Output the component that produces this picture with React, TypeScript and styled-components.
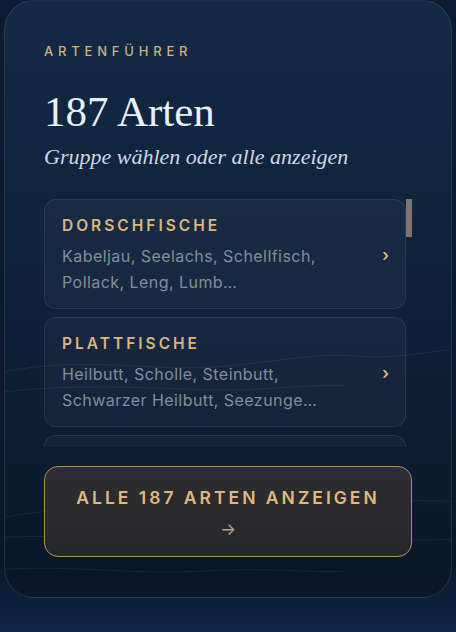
import React from 'react';
import styled, { createGlobalStyle } from 'styled-components';

const GlobalStyle = createGlobalStyle`
  html, body {
    margin: 0;
    padding: 0;
    height: 100%;
  }
  body {
    background: linear-gradient(180deg, #0c1b32 0%, #0a1629 88%, #0f2548 100%);
    font-family: Inter, "Noto Sans", sans-serif;
    overflow: hidden;
  }
`;

const Page = styled.div`
  position: relative;
  width: 456px;
  height: 632px;
  padding: 0 4px;
  box-sizing: border-box;
`;

const Panel = styled.section`
  position: relative;
  height: 598px;
  box-sizing: border-box;
  padding: 40px 39px 40px;
  border-radius: 30px;
  border: 1px solid rgba(150, 175, 205, 0.16);
  background: linear-gradient(180deg, #142945 0%, #0f213a 50%, #0a1628 100%);
  overflow: hidden;
  display: flex;
  flex-direction: column;
`;

const Waves = styled.svg`
  position: absolute;
  left: 0;
  top: 0;
  width: 100%;
  height: 100%;
  pointer-events: none;
`;

const Content = styled.div`
  position: relative;
  z-index: 1;
  display: flex;
  flex-direction: column;
  flex: 1;
  min-height: 0;
`;

const Eyebrow = styled.div`
  font-size: 13px;
  line-height: 20px;
  letter-spacing: 4.8px;
  color: #d2ae7e;
  font-weight: 500;
`;

const Title = styled.h1`
  margin: 28px 0 0;
  font-family: "Liberation Serif", "Times New Roman", serif;
  font-weight: 400;
  font-size: 43px;
  line-height: 46px;
  color: #e9eff7;
`;

const Subtitle = styled.p`
  margin: 8px 0 0;
  font-family: "Liberation Serif", "Times New Roman", serif;
  font-style: italic;
  font-size: 22px;
  line-height: 28px;
  color: #cdd6e2;
`;

const ListArea = styled.div`
  margin-top: 28px;
  height: 248px;
  display: flex;
`;

const List = styled.div`
  flex: 1;
  overflow: hidden;
  display: flex;
  flex-direction: column;
  gap: 8px;
`;

const ScrollTrack = styled.div`
  flex: none;
  width: 6px;
  display: flex;
  flex-direction: column;
`;

const ScrollThumb = styled.div`
  height: 38px;
  background: #7b746f;
`;

const Card = styled.button`
  flex: none;
  width: 362px;
  box-sizing: border-box;
  display: flex;
  align-items: center;
  gap: 12px;
  padding: 16px 16px 13px 17px;
  border-radius: 12px;
  border: 1px solid rgba(160, 185, 215, 0.13);
  background: rgba(255, 255, 255, 0.035);
  text-align: left;
  font-family: inherit;
  cursor: pointer;
`;

const CardBody = styled.div`
  flex: 1;
  min-width: 0;
`;

const CardTitle = styled.div`
  font-size: 15.5px;
  line-height: 20px;
  letter-spacing: 3px;
  font-weight: 600;
  color: #dab680;
`;

const CardText = styled.div`
  margin-top: 7px;
  max-width: 300px;
  font-size: 16px;
  letter-spacing: 0.45px;
  line-height: 26px;
  color: #838d9c;
`;

const Chevron = styled.span`
  flex: none;
  font-size: 17px;
  font-weight: 600;
  color: #dab680;
  line-height: 1;
`;

const AllButton = styled.button`
  margin-top: 19px;
  width: 368px;
  height: 91px;
  box-sizing: border-box;
  border-radius: 14px;
  border: 1.5px solid #ad8f66;
  background: linear-gradient(180deg, rgba(48, 47, 47, 0.92) 0%, rgba(40, 40, 42, 0.92) 100%);
  display: flex;
  flex-direction: column;
  align-items: center;
  padding: 20px 0 0;
  gap: 11px;
  font-family: inherit;
  cursor: pointer;
`;

const ButtonLabel = styled.span`
  font-size: 17.5px;
  line-height: 22px;
  letter-spacing: 3px;
  font-weight: 600;
  color: #e0b97e;
`;

const Arrow = styled.span`
  font-size: 17px;
  line-height: 18px;
  color: #a9a59d;
`;

const groups = [
  { name: 'Dorschfische', species: 'Kabeljau, Seelachs, Schellfisch, Pollack, Leng, Lumb…' },
  { name: 'Plattfische', species: 'Heilbutt, Scholle, Steinbutt, Schwarzer Heilbutt, Seezunge…' },
  { name: 'Barschartige', species: 'Rotbarsch, Wolfsbarsch, Seebarsch, Zander, Flussbarsch…' },
  { name: 'Lachsartige', species: 'Lachs, Meerforelle, Bachforelle, Saibling, Äsche…' },
  { name: 'Makrelen', species: 'Makrele, Thunfisch, Bonito, Stöcker, Hornhecht…' },
  { name: 'Heringsartige', species: 'Hering, Sprotte, Sardine, Sardelle, Finte…' },
];

export default function App() {
  return (
    <>
      <GlobalStyle />
      <Page>
        <Panel>
          <Waves viewBox="0 0 448 598" preserveAspectRatio="none">
            <g fill="none" stroke="rgba(170,195,225,0.09)" strokeWidth="1">
              <path d="M0 372 C60 360 110 366 170 368 C240 370 300 352 350 356 C390 360 420 352 448 350" />
              <path d="M0 392 C70 384 140 388 200 390 C260 392 300 384 340 386" />
              <path d="M0 518 C60 506 130 510 200 512 C260 514 330 498 448 502" />
              <path d="M0 538 C80 534 150 546 230 540 C300 534 360 544 448 540" />
              <path d="M0 570 C70 566 130 576 200 572 C260 568 310 574 340 572" />
            </g>
          </Waves>
          <Content>
            <Eyebrow>ARTENFÜHRER</Eyebrow>
            <Title>187 Arten</Title>
            <Subtitle>Gruppe wählen oder alle anzeigen</Subtitle>
            <ListArea>
              <List>
                {groups.map(group => (
                  <Card key={group.name}>
                    <CardBody>
                      <CardTitle>{group.name.toUpperCase()}</CardTitle>
                      <CardText>{group.species}</CardText>
                    </CardBody>
                    <Chevron>›</Chevron>
                  </Card>
                ))}
              </List>
              <ScrollTrack>
                <ScrollThumb />
              </ScrollTrack>
            </ListArea>
            <AllButton>
              <ButtonLabel>ALLE 187 ARTEN ANZEIGEN</ButtonLabel>
              <Arrow>→</Arrow>
            </AllButton>
          </Content>
        </Panel>
      </Page>
    </>
  );
}
